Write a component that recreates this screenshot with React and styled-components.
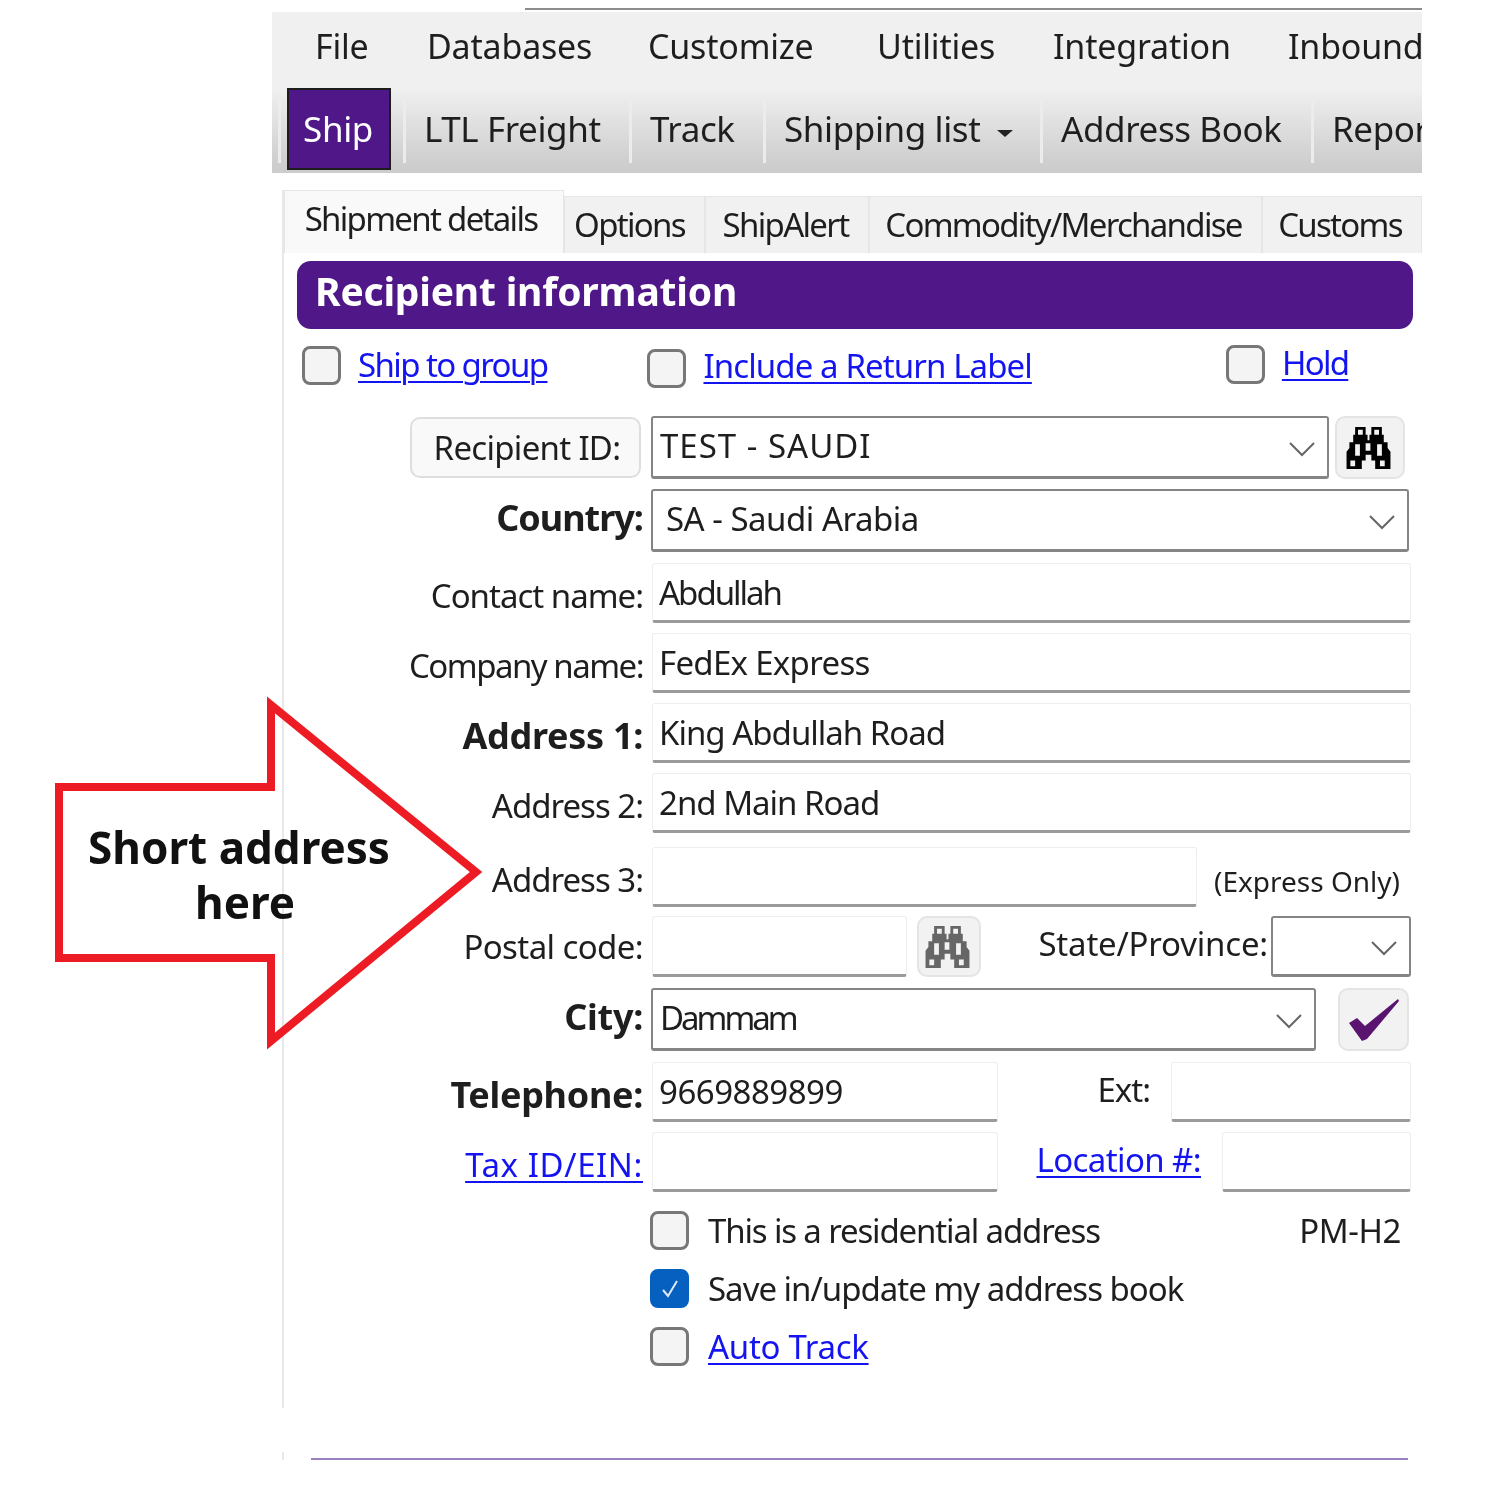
import styled, { createGlobalStyle } from "styled-components"

const GlobalStyle = createGlobalStyle`
    html, body {
        margin: 0;
        padding: 0;
        background: #fff;
    }
    * {
        box-sizing: border-box;
    }
`

const FONT = `"Noto Sans", "Open Sans", sans-serif`
const PURPLE = "#4f1787"
const LINK = "#1414f0"

//Window chrome
const Page = styled.div`
    position: relative;
    width: 1488px;
    height: 1492px;
    overflow: hidden;
    background: #fff;
    font-family: ${FONT};
    color: #1e1e1e;
    filter: blur(0.55px);
`

const Window = styled.div`
    width: 1150px;
    margin-left: 272px;
    padding-top: 8px;
`

const TopLine = styled.div`
    height: 2px;
    margin-left: 253px;
    background: #8c8c8c;
`

const Menu = styled.div`
    display: flex;
    height: 76px;
    margin-top: 2px;
    padding: 12px 0 0 43px;
    background: #f0f0f0;
    overflow: hidden;
    white-space: nowrap;
    font-size: 34px;
    line-height: 44px;
    letter-spacing: -0.2px;
`

const MenuItem = styled.span`
    flex: none;
    width: ${props => props.$w}px;
`

const Toolbar = styled.div`
    position: relative;
    display: flex;
    height: 85px;
    padding-left: 15px;
    overflow: hidden;
    background: linear-gradient(#f0f0f0, #cfcfcf 85%, #cccccc);
    white-space: nowrap;
    font-size: 35px;
    letter-spacing: -0.4px;
    &::before {
        content: "";
        position: absolute;
        left: 6px;
        top: 12px;
        width: 3px;
        height: 63px;
        background: #ececec;
    }
`

const ShipButton = styled.div`
    flex: none;
    width: 104px;
    height: 82px;
    padding: 17px 2px 0 0;
    text-align: center;
    line-height: 44px;
    background: ${PURPLE};
    border: 2px solid #1d1d1d;
    color: #fff;
`

const ToolItem = styled.div`
    position: relative;
    flex: none;
    width: ${props => props.$w}px;
    margin-left: ${props => props.$ml || 0}px;
    padding: 19px 0 0 21px;
    line-height: 44px;
    &::before {
        content: "";
        position: absolute;
        left: 0;
        top: 12px;
        width: 3px;
        height: 63px;
        background: #ececec;
    }
`

const Caret = styled.span`
    display: inline-block;
    margin-left: 17px;
    vertical-align: 5px;
    border-left: 8px solid transparent;
    border-right: 8px solid transparent;
    border-top: 7px solid #222;
`

//Tabs
const TabPanel = styled.div`
    margin: 17px 0 0 10px;
    height: 1218px;
    border-left: 2px solid #e8e8e8;
`

const Tabs = styled.div`
    display: flex;
    align-items: flex-end;
    height: 63px;
    width: 1140px;
    font-size: 33px;
    letter-spacing: -1.7px;
    white-space: nowrap;
`

const Tab = styled.div`
    flex: none;
    width: ${props => props.$w}px;
    height: ${props => (props.$active ? 63 : 57)}px;
    padding: 6px ${props => props.$pr}px 0 0;
    margin-top: auto;
    text-align: center;
    line-height: 44px;
    background: ${props => (props.$active ? "#f9f9f9" : "#f1f1f1")};
    border: 1px solid #e6e6e6;
    border-bottom: none;
`

const SectionHeader = styled.div`
    height: 68px;
    margin: 8px 9px 0 13px;
    padding-left: 18px;
    border-radius: 14px;
    background: ${PURPLE};
    color: #fff;
    font-size: 39px;
    font-weight: 700;
    line-height: 60px;
    letter-spacing: -0.2px;
`

//Form rows
const CheckStrip = styled.div`
    display: flex;
    height: 44px;
    margin-top: 14px;
    font-size: 33px;
`

const StripItem = styled.div`
    display: flex;
    align-items: center;
    gap: 17px;
    margin-left: ${props => props.$ml}px;
    margin-top: ${props => props.$mt}px;
    height: 39px;
`

const Box = styled.span`
    flex: none;
    display: flex;
    align-items: center;
    justify-content: center;
    width: 39px;
    height: 39px;
    border-radius: 8px;
    border: 3px solid ${props => (props.$checked ? "#0560c0" : "#777")};
    background: ${props => (props.$checked ? "#0560c0" : "#f4f4f4")};
`

const Link = styled.a`
    margin-bottom: ${props => props.$mb || 0}px;
    color: ${LINK};
    letter-spacing: ${props => props.$ls}px;
    text-decoration: underline;
    text-decoration-thickness: 2px;
    text-underline-offset: 4px;
    white-space: nowrap;
`

const Form = styled.div`
    display: flex;
    flex-direction: column;
    font-size: 33px;
    letter-spacing: -1px;
`

const Row = styled.div`
    display: flex;
    align-items: stretch;
    height: ${props => props.$h}px;
    margin-top: ${props => props.$mt}px;
`

const Label = styled.div`
    flex: none;
    width: 359px;
    margin-right: ${props => (props.$tight ? 8 : 9)}px;
    display: flex;
    justify-content: flex-end;
    align-items: center;
    padding-top: ${props => props.$pt ?? 4}px;
    padding-bottom: ${props => props.$pb ?? 0}px;
    font-size: ${props => (props.$bold ? 36 : 33)}px;
    font-weight: ${props => (props.$bold ? 700 : 400)};
    letter-spacing: ${props => props.$ls ?? (props.$bold ? -0.3 : -1)}px;
    white-space: nowrap;
`

const IdButton = styled.div`
    width: 231px;
    height: 61px;
    margin-right: 2px;
    display: flex;
    align-items: center;
    justify-content: center;
    padding-left: 3px;
    border: 2px solid #dedede;
    border-radius: 10px;
    background: #f9f9f9;
    letter-spacing: -0.7px;
`

const Select = styled.div`
    flex: none;
    display: flex;
    align-items: center;
    width: ${props => props.$w}px;
    margin-left: ${props => props.$ml || 0}px;
    padding: 0 12px 4px ${props => props.$pl || 7}px;
    border: 2px solid #858585;
    border-bottom-width: 3px;
    border-radius: 3px;
    background: #fff;
    letter-spacing: ${props => props.$ls ?? -1}px;
    white-space: nowrap;
`

const ChevronSlot = styled.span`
    display: flex;
    margin-left: auto;
    margin-top: 8px;
`

const Input = styled.div`
    flex: none;
    display: flex;
    align-items: center;
    width: ${props => props.$w}px;
    margin-left: ${props => props.$ml || 0}px;
    padding: 0 0 0 6px;
    border: 1px solid #eeeeee;
    border-bottom: 3px solid #9a9a9a;
    border-radius: 3px;
    background: #fff;
    letter-spacing: ${props => props.$ls ?? -1}px;
    white-space: nowrap;
`

const IconButton = styled.div`
    flex: none;
    display: flex;
    align-items: center;
    justify-content: center;
    width: ${props => props.$w}px;
    margin-left: ${props => props.$ml}px;
    padding-right: ${props => props.$pr || 0}px;
    border: 2px solid #e4e4e4;
    border-radius: 10px;
    background: #f2f2f2;
`

const InlineLabel = styled.div`
    flex: none;
    display: flex;
    align-items: center;
    justify-content: flex-end;
    width: ${props => props.$w}px;
    padding-bottom: 6px;
    letter-spacing: ${props => props.$ls ?? -1}px;
    white-space: nowrap;
`

const SmallNote = styled.div`
    display: flex;
    align-items: center;
    margin-left: 17px;
    padding-top: 8px;
    font-size: 28px;
    letter-spacing: 0;
    white-space: nowrap;
`

const CheckRow = styled.div`
    display: flex;
    align-items: center;
    gap: 19px;
    height: 39px;
    margin-top: ${props => props.$mt}px;
    margin-left: 366px;
`

const CheckText = styled.span`
    letter-spacing: ${props => props.$ls ?? -1}px;
`

const PmCode = styled.div`
    margin-left: auto;
    margin-right: 21px;
    letter-spacing: -0.4px;
`

//Foot of the panel
const FootTick = styled.div`
    height: 8px;
    margin: 44px 0 0 10px;
    border-left: 2px solid #e8e8e8;
    padding-left: 27px;
    display: flex;
    align-items: flex-end;
`

const FootLine = styled.div`
    width: 1097px;
    height: 2px;
    background: #9c80c4;
`

//Annotation laid over the form
const Callout = styled.div`
    position: absolute;
    left: 50px;
    top: 690px;
    width: 440px;
    height: 365px;
`

const CalloutText = styled.div`
    position: absolute;
    left: 0;
    top: 130px;
    width: 378px;
    text-align: center;
    font-size: 44px;
    font-weight: 700;
    line-height: 55px;
    color: #111;
`

const CalloutLine = styled.div`
    padding-left: ${props => props.$pl || 0}px;
`

const Chevron = () => (
    <ChevronSlot>
        <svg width="26" height="16" viewBox="0 0 26 16" fill="none" stroke="#666" strokeWidth="2">
            <path d="M1 2 L13 14 L25 2" />
        </svg>
    </ChevronSlot>
)

const Binoculars = ({ color }) => (
    <svg width="47" height="42" viewBox="0 0 48 44" fill={color}>
        <path
            fillRule="evenodd"
            d="M10 0H21V8H23V14H25V8H27V0H38V8H40V16H44V22L47 26V44H31V35H27V29H21V35H17V44H1V26L4 22V16H8V8H10Z
               M13 3V8H18V3Z M30 3V8H35V3Z M10 18V30H15V18Z M33 18V30H38V18Z M21 17V25H26V17Z M5 35V41H10V35Z M36 35V41H41V35Z"
        />
    </svg>
)

const PurpleCheck = () => (
    <svg width="52" height="44" viewBox="0 0 52 44">
        <path d="M1 25 L9 20 L17 28 L50 1 L51 3 L19 41 L14 43 Z" fill="#5a1470" />
    </svg>
)

const WhiteTick = () => (
    <svg width="20" height="20" viewBox="0 0 20 20" fill="none" stroke="#dfeaf7" strokeWidth="2">
        <path d="M3 11 L8 17 L17 2" />
    </svg>
)

const ArrowOutline = () => (
    <svg width="440" height="365" viewBox="0 0 440 365" fill="none" stroke="#ed1c24" strokeWidth="8">
        <path d="M9 97 H221 V15 L426 182 L221 351 V268 H9 Z" />
    </svg>
)

const App = () => {
    return (
        <Page>
            <GlobalStyle />
            <Window>
                <TopLine />
                <Menu>
                    <MenuItem $w={112}>File</MenuItem>
                    <MenuItem $w={221}>Databases</MenuItem>
                    <MenuItem $w={229}>Customize</MenuItem>
                    <MenuItem $w={176}>Utilities</MenuItem>
                    <MenuItem $w={235}>Integration</MenuItem>
                    <MenuItem $w={140}>Inbound</MenuItem>
                </Menu>
                <Toolbar>
                    <ShipButton>Ship</ShipButton>
                    <ToolItem $ml={12} $w={226}>LTL Freight</ToolItem>
                    <ToolItem $w={134}>Track</ToolItem>
                    <ToolItem $w={277}>Shipping list<Caret /></ToolItem>
                    <ToolItem $w={271}>Address Book</ToolItem>
                    <ToolItem $w={120}>Reports</ToolItem>
                </Toolbar>
                <TabPanel>
                    <Tabs>
                        <Tab $active $w={280} $pr={6}>Shipment details</Tab>
                        <Tab $w={141} $pr={10}>Options</Tab>
                        <Tab $w={164} $pr={3}>ShipAlert</Tab>
                        <Tab $w={393} $pr={4}>Commodity/Merchandise</Tab>
                        <Tab $w={160} $pr={4}>Customs</Tab>
                    </Tabs>
                    <SectionHeader>Recipient information</SectionHeader>
                    <CheckStrip>
                        <StripItem $ml={18} $mt={3}>
                            <Box />
                            <Link $ls={-1.6} $mb={2}>Ship to group</Link>
                        </StripItem>
                        <StripItem $ml={100} $mt={6}>
                            <Box />
                            <Link $ls={-0.9} $mb={6}>Include a Return Label</Link>
                        </StripItem>
                        <StripItem $ml={194} $mt={2}>
                            <Box />
                            <Link $ls={-1.7} $mb={4}>Hold</Link>
                        </StripItem>
                    </CheckStrip>
                    <Form>
                        <Row $h={63} $mt={29}>
                            <Label $tight $pt={0}>
                                <IdButton>Recipient ID:</IdButton>
                            </Label>
                            <Select $w={678} $ls={1}>TEST - SAUDI<Chevron /></Select>
                            <IconButton $ml={6} $w={70} $pr={4}><Binoculars color="#000" /></IconButton>
                        </Row>
                        <Row $h={63} $mt={10}>
                            <Label $bold $tight $pt={0} $pb={6} $ls={-1}>Country:</Label>
                            <Select $w={758} $pl={13} $ls={-0.5}>SA - Saudi Arabia<Chevron /></Select>
                        </Row>
                        <Row $h={60} $mt={11}>
                            <Label>Contact name:</Label>
                            <Input $w={759} $ls={-2}>Abdullah</Input>
                        </Row>
                        <Row $h={60} $mt={10}>
                            <Label $ls={-1.5}>Company name:</Label>
                            <Input $w={759} $ls={-0.7}>FedEx Express</Input>
                        </Row>
                        <Row $h={60} $mt={10}>
                            <Label $bold>Address 1:</Label>
                            <Input $w={759}>King Abdullah Road</Input>
                        </Row>
                        <Row $h={60} $mt={10}>
                            <Label>Address 2:</Label>
                            <Input $w={759}>2nd Main Road</Input>
                        </Row>
                        <Row $h={60} $mt={14}>
                            <Label>Address 3:</Label>
                            <Input $w={545} />
                            <SmallNote>(Express Only)</SmallNote>
                        </Row>
                        <Row $h={61} $mt={9}>
                            <Label $pt={0} $ls={-0.6}>Postal code:</Label>
                            <Input $w={255} />
                            <IconButton $ml={10} $w={64} $pr={4}><Binoculars color="#666" /></IconButton>
                            <InlineLabel $w={287} $ls={-0.2}>State/Province:</InlineLabel>
                            <Select $w={140} $ml={3}><Chevron /></Select>
                        </Row>
                        <Row $h={63} $mt={11}>
                            <Label $bold $tight $pt={0} $pb={6}>City:</Label>
                            <Select $w={665} $ls={-3}>Dammam<Chevron /></Select>
                            <IconButton $ml={22} $w={71}><PurpleCheck /></IconButton>
                        </Row>
                        <Row $h={60} $mt={11}>
                            <Label $bold>Telephone:</Label>
                            <Input $w={346} $ls={-0.5}>9669889899</Input>
                            <InlineLabel $w={152}>Ext:</InlineLabel>
                            <Input $w={240} $ml={21} />
                        </Row>
                        <Row $h={60} $mt={10}>
                            <Label><Link $ls={0.6}>Tax ID/EIN:</Link></Label>
                            <Input $w={346} />
                            <InlineLabel $w={203}><Link $ls={-0.6}>Location #:</Link></InlineLabel>
                            <Input $w={189} $ml={21} />
                        </Row>
                        <CheckRow $mt={19}>
                            <Box />
                            <CheckText $ls={-1.15}>This is a residential address</CheckText>
                            <PmCode>PM-H2</PmCode>
                        </CheckRow>
                        <CheckRow $mt={19}>
                            <Box $checked><WhiteTick /></Box>
                            <CheckText>Save in/update my address book</CheckText>
                        </CheckRow>
                        <CheckRow $mt={19}>
                            <Box />
                            <Link $ls={-0.3}>Auto Track</Link>
                        </CheckRow>
                    </Form>
                </TabPanel>
                <FootTick>
                    <FootLine />
                </FootTick>
            </Window>
            <Callout>
                <ArrowOutline />
                <CalloutText>
                    <CalloutLine>Short address</CalloutLine>
                    <CalloutLine $pl={12}>here</CalloutLine>
                </CalloutText>
            </Callout>
        </Page>
    )
}

export default App
